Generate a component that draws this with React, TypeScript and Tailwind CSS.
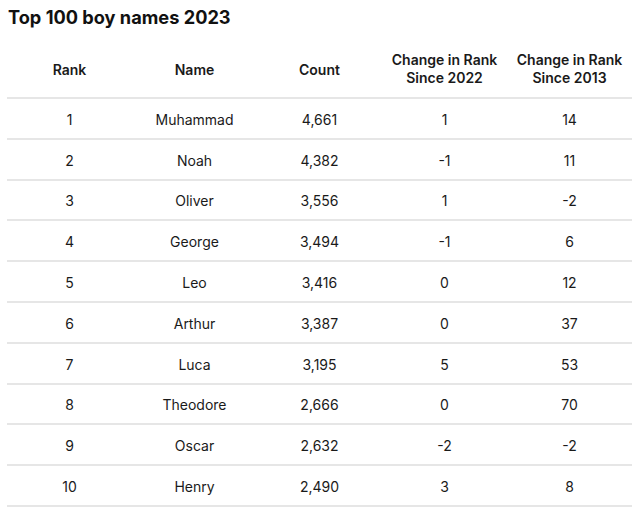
const ROWS = [
  ['1', 'Muhammad', '4,661', '1', '14'],
  ['2', 'Noah', '4,382', '-1', '11'],
  ['3', 'Oliver', '3,556', '1', '-2'],
  ['4', 'George', '3,494', '-1', '6'],
  ['5', 'Leo', '3,416', '0', '12'],
  ['6', 'Arthur', '3,387', '0', '37'],
  ['7', 'Luca', '3,195', '5', '53'],
  ['8', 'Theodore', '2,666', '0', '70'],
  ['9', 'Oscar', '2,632', '-2', '-2'],
  ['10', 'Henry', '2,490', '3', '8'],
];

export default function App() {
  return (
    <div className="h-[529px] w-[640px] bg-white px-[7px] pt-[5px] text-[#1a1a1a] [font-family:Inter,'Noto_Sans',sans-serif]">
      <h1 className="pl-[1px] text-[18.2px] font-bold leading-[25px] text-[#111]">
        Top 100 boy names 2023
      </h1>
      <table className="mt-[10px] w-[625px] table-fixed border-collapse text-center text-[14px]">
        <thead>
          <tr className="h-[58px] border-b-2 border-[#e6e6e6] align-middle">
            <th className="pt-[1px] font-semibold">Rank</th>
            <th className="pt-[1px] font-semibold">Name</th>
            <th className="pt-[1px] font-semibold">Count</th>
            <th className="pt-[1px] font-semibold leading-[18px]">
              Change in Rank
              <br />
              Since 2022
            </th>
            <th className="pt-[1px] font-semibold leading-[18px]">
              Change in Rank
              <br />
              Since 2013
            </th>
          </tr>
        </thead>
        <tbody>
          {ROWS.map((r) => (
            <tr key={r[0]} className="h-[40.8px] border-b-2 border-[#e6e6e6]">
              {r.map((c, i) => (
                <td key={i} className="pt-[2px]">
                  {c}
                </td>
              ))}
            </tr>
          ))}
        </tbody>
      </table>
    </div>
  );
}
